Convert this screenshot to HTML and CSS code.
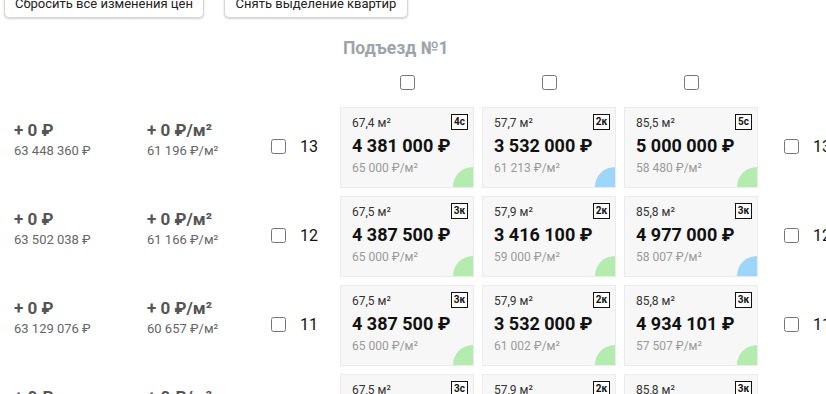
FILE: index.html
```html
<!DOCTYPE html>
<html lang="ru">
<head>
<meta charset="utf-8">
<link rel="stylesheet" href="styles.css">
</head>
<body>
<div class="toolbar">
  <button class="btn btn-wide">Сбросить все изменения цен</button>
  <button class="btn">Снять выделение квартир</button>
</div>

<div class="grid head">
  <div class="title">Подъезд №1</div>
</div>
<div class="grid head-checks">
  <div class="checks">
    <div class="check-cell"><input type="checkbox" class="cb"></div>
    <div class="check-cell"><input type="checkbox" class="cb"></div>
    <div class="check-cell"><input type="checkbox" class="cb"></div>
  </div>
</div>

<div class="grid row">
  <div class="sum"><div class="sum-main">+ 0 ₽</div><div class="sum-sub">63 448 360 ₽</div></div>
  <div class="sum"><div class="sum-main">+ 0 ₽/м²</div><div class="sum-sub">61 196 ₽/м²</div></div>
  <div class="floor"><input type="checkbox" class="cb"><span>13</span></div>
  <div class="cards">
    <div class="card"><div class="area">67,4 м²</div><div class="price">4 381 000 ₽</div><div class="ppm">65 000 ₽/м²</div><span class="badge">4с</span><span class="dot green"></span></div>
    <div class="card"><div class="area">57,7 м²</div><div class="price">3 532 000 ₽</div><div class="ppm">61 213 ₽/м²</div><span class="badge">2к</span><span class="dot blue"></span></div>
    <div class="card"><div class="area">85,5 м²</div><div class="price">5 000 000 ₽</div><div class="ppm">58 480 ₽/м²</div><span class="badge">5с</span><span class="dot green"></span></div>
  </div>
  <div class="floor floor-right"><input type="checkbox" class="cb"><span>13</span></div>
</div>

<div class="grid row">
  <div class="sum"><div class="sum-main">+ 0 ₽</div><div class="sum-sub">63 502 038 ₽</div></div>
  <div class="sum"><div class="sum-main">+ 0 ₽/м²</div><div class="sum-sub">61 166 ₽/м²</div></div>
  <div class="floor"><input type="checkbox" class="cb"><span>12</span></div>
  <div class="cards">
    <div class="card"><div class="area">67,5 м²</div><div class="price">4 387 500 ₽</div><div class="ppm">65 000 ₽/м²</div><span class="badge">3к</span><span class="dot green"></span></div>
    <div class="card"><div class="area">57,9 м²</div><div class="price">3 416 100 ₽</div><div class="ppm">59 000 ₽/м²</div><span class="badge">2к</span><span class="dot green"></span></div>
    <div class="card"><div class="area">85,8 м²</div><div class="price">4 977 000 ₽</div><div class="ppm">58 007 ₽/м²</div><span class="badge">3к</span><span class="dot blue"></span></div>
  </div>
  <div class="floor floor-right"><input type="checkbox" class="cb"><span>12</span></div>
</div>

<div class="grid row">
  <div class="sum"><div class="sum-main">+ 0 ₽</div><div class="sum-sub">63 129 076 ₽</div></div>
  <div class="sum"><div class="sum-main">+ 0 ₽/м²</div><div class="sum-sub">60 657 ₽/м²</div></div>
  <div class="floor"><input type="checkbox" class="cb"><span>11</span></div>
  <div class="cards">
    <div class="card"><div class="area">67,5 м²</div><div class="price">4 387 500 ₽</div><div class="ppm">65 000 ₽/м²</div><span class="badge">3к</span><span class="dot green"></span></div>
    <div class="card"><div class="area">57,9 м²</div><div class="price">3 532 000 ₽</div><div class="ppm">61 002 ₽/м²</div><span class="badge">2к</span><span class="dot green"></span></div>
    <div class="card"><div class="area">85,8 м²</div><div class="price">4 934 101 ₽</div><div class="ppm">57 507 ₽/м²</div><span class="badge">3к</span><span class="dot green"></span></div>
  </div>
  <div class="floor floor-right"><input type="checkbox" class="cb"><span>11</span></div>
</div>

<div class="grid row">
  <div class="sum"><div class="sum-main">+ 0 ₽</div><div class="sum-sub">63 204 500 ₽</div></div>
  <div class="sum"><div class="sum-main">+ 0 ₽/м²</div><div class="sum-sub">60 730 ₽/м²</div></div>
  <div class="floor"><input type="checkbox" class="cb"><span>10</span></div>
  <div class="cards">
    <div class="card"><div class="area">67,5 м²</div><div class="price">4 387 500 ₽</div><div class="ppm">65 000 ₽/м²</div><span class="badge">3с</span><span class="dot green"></span></div>
    <div class="card"><div class="area">57,9 м²</div><div class="price">3 532 000 ₽</div><div class="ppm">61 002 ₽/м²</div><span class="badge">2к</span><span class="dot green"></span></div>
    <div class="card"><div class="area">85,8 м²</div><div class="price">4 977 000 ₽</div><div class="ppm">58 007 ₽/м²</div><span class="badge">3к</span><span class="dot green"></span></div>
  </div>
  <div class="floor floor-right"><input type="checkbox" class="cb"><span>10</span></div>
</div>
</body>
</html>
```

FILE: styles.css
```css
* { box-sizing: border-box; }
html, body { margin: 0; padding: 0; background: #fff; overflow: hidden; }
body {
  font-family: Roboto, "Liberation Sans", Arial, sans-serif;
  color: #111;
  width: 826px;
  height: 394px;
}
.toolbar {
  display: flex;
  gap: 20px;
  padding-left: 4px;
  margin-top: -12px;
  height: 30px;
}
.btn {
  font-family: inherit;
  font-size: 13px;
  color: #222;
  background: #fff;
  border: 1px solid #d6d6d6;
  border-radius: 5px;
  box-shadow: 0 1px 2px rgba(0,0,0,0.18);
  height: 30px;
  padding: 0 9px;
  width: 184px;
}
.btn-wide { width: 200px; }

.grid {
  display: grid;
  grid-template-columns: 133px 124px 69px 418px auto;
  padding-left: 14px;
}
.head { margin-top: 20px; height: 20px; }
.title {
  grid-column: 4;
  font-size: 17.5px;
  line-height: 20px;
  font-weight: 700;
  color: #9ea4a9;
  padding-left: 3px;
}
.head-checks { margin-top: 17px; height: 15px; margin-bottom: 17px; }
.checks {
  grid-column: 4;
  display: grid;
  grid-template-columns: repeat(3, 134px);
  column-gap: 8px;
}
.check-cell { display: flex; justify-content: center; }
.cb {
  margin: 0;
  width: 15px;
  height: 15px;
}

.row { height: 81px; margin-bottom: 8px; }
.sum { padding-top: 13px; color: #555; }
.sum-main { font-size: 17px; line-height: 20px; font-weight: 700; }
.sum-sub { font-size: 13px; line-height: 16px; margin-top: 3px; color: #666; }

.floor {
  display: flex;
  align-items: center;
  gap: 14px;
  font-size: 16px;
  color: #111;
  padding-bottom: 3px;
}
.floor-right { margin-left: 26px; }

.cards {
  display: grid;
  grid-template-columns: repeat(3, 134px);
  column-gap: 8px;
}
.card {
  position: relative;
  overflow: hidden;
  height: 81px;
  background: #f7f7f7;
  border: 1px solid #ebebeb;
  padding: 7px 0 0 11px;
}
.area { font-size: 12px; line-height: 16px; color: #333; }
.price { font-size: 18px; line-height: 22px; font-weight: 700; color: #111; margin-top: 4px; }
.ppm { font-size: 12px; line-height: 16px; color: #9a9a9a; margin-top: 3px; }
.badge {
  position: absolute;
  top: 6px;
  right: 5px;
  width: 17px;
  height: 16px;
  border: 1px solid #111;
  background: #fff;
  font-size: 10px;
  font-weight: 700;
  line-height: 14px;
  text-align: center;
  color: #111;
}
.dot {
  position: absolute;
  right: 0;
  bottom: 0;
  width: 20px;
  height: 20px;
  border-top-left-radius: 20px;
}
.green { background: #b4ecaf; }
.blue { background: #9dd6fb; }
```
